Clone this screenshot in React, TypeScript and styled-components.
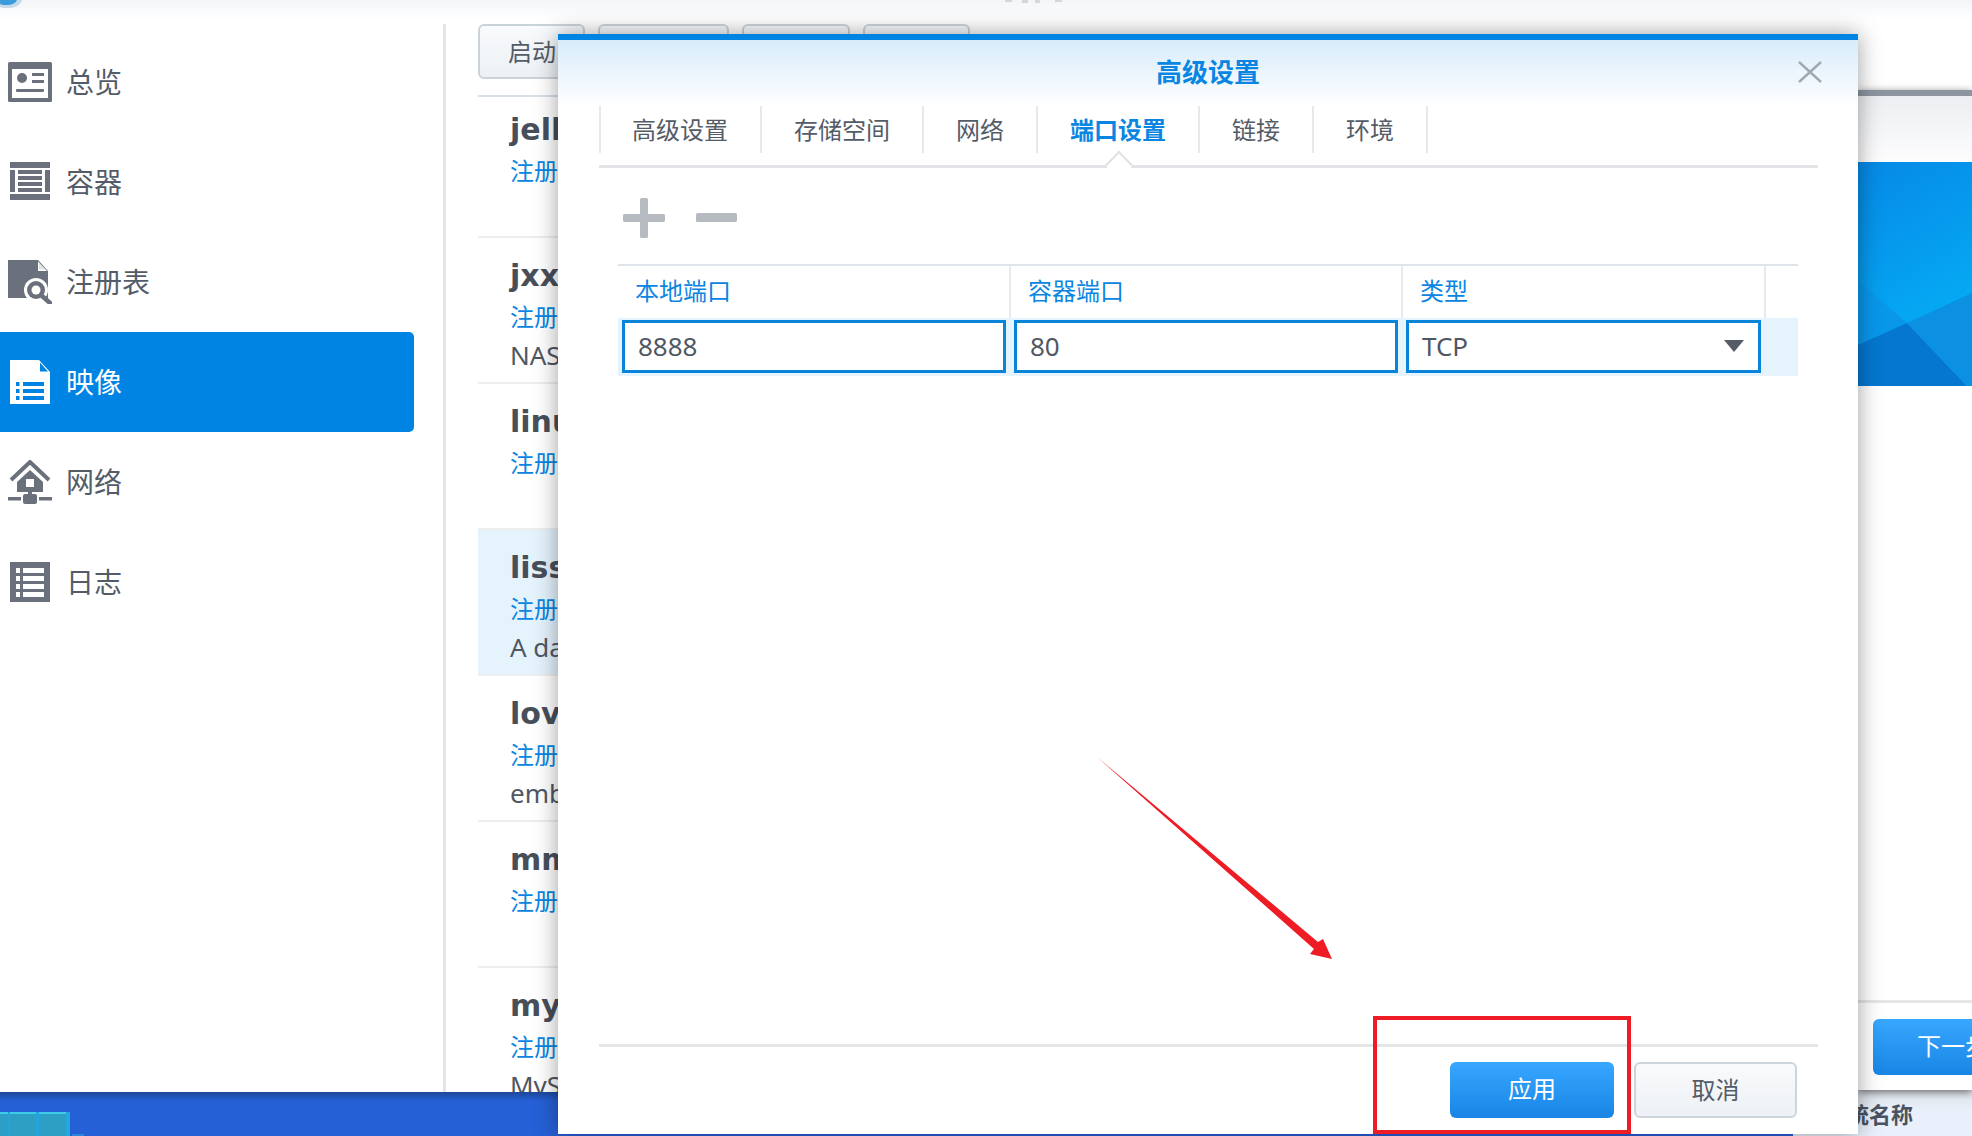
import styled, { createGlobalStyle } from "styled-components";

const BLUE = "#0084e3";
const GRAY = "#6a717c";
const TEXT = "#545c68";

const GlobalStyle = createGlobalStyle`
  html, body {
    margin: 0;
    padding: 0;
    overflow: hidden;
    background: #fff;
  }
  * {
    box-sizing: border-box;
  }
  body {
    font-family: "Noto Sans", "Noto Sans CJK SC", sans-serif;
    color: ${TEXT};
  }
`;

function OverviewIcon() {
  return (
    <svg width="44" height="44" viewBox="0 0 44 44">
      <rect y="2" width="44" height="40" rx="1.5" fill="currentColor" />
      <rect x="4" y="9" width="36" height="29" fill="#fff" />
      <circle cx="14" cy="18" r="5" fill="currentColor" />
      <rect x="24" y="13" width="12" height="3" fill="currentColor" />
      <rect x="24" y="20" width="12" height="3" fill="currentColor" />
      <rect x="8" y="29" width="28" height="3" rx="1" fill="currentColor" />
    </svg>
  );
}

function ContainerIcon() {
  return (
    <svg width="44" height="44" viewBox="0 0 44 44">
      <rect x="2" y="2" width="40" height="6" fill="currentColor" />
      <rect x="2" y="34" width="40" height="6" fill="currentColor" />
      <rect x="2" y="10" width="5" height="22" fill="currentColor" />
      <rect x="37" y="10" width="5" height="22" fill="currentColor" />
      <rect x="10" y="10" width="24" height="4" fill="currentColor" />
      <rect x="10" y="16" width="24" height="4" fill="currentColor" />
      <rect x="10" y="22" width="24" height="4" fill="currentColor" />
      <rect x="10" y="28" width="24" height="4" fill="currentColor" />
    </svg>
  );
}

function RegistryIcon() {
  return (
    <svg width="44" height="44" viewBox="0 0 44 44">
      <path d="M0 0H30L40 11V38H0Z" fill="currentColor" />
      <path d="M30 1.5V11H39Z" fill="#fff" />
      <path d="M31 3L37 9.5H31Z" fill="currentColor" opacity="0.2" />
      <circle cx="28" cy="30" r="12" fill="#fff" />
      <circle cx="28" cy="30" r="9" fill="currentColor" />
      <circle cx="28" cy="30" r="4.5" fill="#fff" />
      <path d="M34 36L42 43" stroke="currentColor" strokeWidth="4.5" strokeLinecap="round" />
    </svg>
  );
}

function ImageIcon() {
  return (
    <svg width="44" height="44" viewBox="0 0 44 44">
      <path d="M2 0H31L42 12V44H2Z" fill="#fff" />
      <path d="M32 2.5V11.5H40Z" fill={BLUE} />
      <g fill={BLUE}>
        <rect x="8" y="22" width="3.5" height="4" />
        <rect x="8" y="29" width="3.5" height="4" />
        <rect x="8" y="36" width="3.5" height="4" />
        <rect x="15" y="22" width="21" height="4" />
        <rect x="15" y="29" width="21" height="4" />
        <rect x="15" y="36" width="21" height="4" />
      </g>
    </svg>
  );
}

function NetworkIcon() {
  return (
    <svg width="44" height="44" viewBox="0 0 44 44">
      <path d="M3 20L22 2L41 20" fill="none" stroke="currentColor" strokeWidth="4" />
      <path d="M22 10L35 22V32H9V22Z" fill="currentColor" />
      <rect x="18" y="19" width="8" height="8" fill="#fff" />
      <rect x="20" y="30" width="4" height="6" fill="currentColor" />
      <rect y="37" width="13" height="3.5" fill="currentColor" />
      <rect x="31" y="37" width="13" height="3.5" fill="currentColor" />
      <rect x="15" y="34" width="14" height="10" rx="2" fill="currentColor" />
    </svg>
  );
}

function LogIcon() {
  return (
    <svg width="44" height="44" viewBox="0 0 44 44">
      <rect x="2" y="2" width="40" height="40" fill="currentColor" />
      <g fill="#fff">
        <rect x="8" y="8" width="4" height="5" />
        <rect x="8" y="16" width="4" height="5" />
        <rect x="8" y="24" width="4" height="5" />
        <rect x="8" y="32" width="4" height="5" />
        <rect x="15" y="8" width="21" height="5" />
        <rect x="15" y="16" width="21" height="5" />
        <rect x="15" y="24" width="21" height="5" />
        <rect x="15" y="32" width="21" height="5" />
      </g>
    </svg>
  );
}

const navItems = [
  { label: "总览", icon: <OverviewIcon /> },
  { label: "容器", icon: <ContainerIcon /> },
  { label: "注册表", icon: <RegistryIcon /> },
  { label: "映像", icon: <ImageIcon />, active: true },
  { label: "网络", icon: <NetworkIcon /> },
  { label: "日志", icon: <LogIcon /> },
];

const images = [
  { name: "jell", desc: "" },
  { name: "jxx", desc: "NAS" },
  { name: "linu", desc: "" },
  { name: "liss", desc: "A da", selected: true },
  { name: "lov", desc: "emb" },
  { name: "mm", desc: "" },
  { name: "my", desc: "MyS" },
];

const tabs = ["高级设置", "存储空间", "网络", "端口设置", "链接", "环境"];

export default function App() {
  return (
    <Desktop>
      <GlobalStyle />
      <AppWindow>
        <TopStrip>
          <svg width="22" height="8" viewBox="0 0 22 8">
            <path d="M0 0H22C20 6 14 8 8 8C4 8 2 8 0 7Z" fill="#c5d9e8" />
            <path d="M0 0H17C15 4 11 5 7 5C4 5 2 5 0 4Z" fill="#3c9bdc" />
          </svg>
          <TitleMarks width="60" height="4" viewBox="0 0 60 4">
            <rect x="0" width="7" height="2" fill="#d4d7db" />
            <rect x="17" width="6" height="3" fill="#d4d7db" />
            <rect x="30" width="5" height="3" fill="#d4d7db" />
            <rect x="50" width="7" height="2" fill="#d4d7db" />
          </TitleMarks>
        </TopStrip>
        <WindowBody>
          <Sidebar>
            {navItems.map((item) => (
              <NavItem key={item.label} $active={item.active}>
                {item.icon}
                <span>{item.label}</span>
              </NavItem>
            ))}
          </Sidebar>
          <Main>
            <Toolbar>
              <ToolButton $width={107}>启动</ToolButton>
              <ToolButton $width={131} />
              <ToolButton $width={108} />
              <ToolButton $width={107} />
            </Toolbar>
            <ImageList>
              {images.map((img) => (
                <ImageRow key={img.name} $selected={img.selected}>
                  <ImageName>{img.name}</ImageName>
                  <ImageSource>注册</ImageSource>
                  <ImageDesc>{img.desc}</ImageDesc>
                </ImageRow>
              ))}
            </ImageList>
          </Main>
        </WindowBody>
      </AppWindow>
      <Taskbar>
        <svg width="86" height="24" viewBox="0 0 86 24">
          <rect width="70" height="24" fill="#2e9fc4" />
          <rect width="70" height="2" fill="#3dcbe8" />
          <rect x="8" width="2" height="24" fill="#25a3dc" />
          <rect x="36" width="3" height="24" fill="#25a3dc" />
          <rect x="66" width="4" height="24" fill="#25a8de" />
          <rect x="72" y="22" width="12" height="2" fill="#2a86dc" />
        </svg>
      </Taskbar>

      <SummaryPanel>
        <SummaryLabel>系统名称</SummaryLabel>
      </SummaryPanel>

      <WizardWindow>
        <WizardHeader />
        <WizardHero viewBox="0 0 114 224" preserveAspectRatio="none">
          <defs>
            <linearGradient id="heroTop" x1="0" y1="0" x2="0.3" y2="1">
              <stop offset="0" stopColor="#0689e6" />
              <stop offset="1" stopColor="#05b0f7" />
            </linearGradient>
          </defs>
          <rect width="114" height="224" fill="url(#heroTop)" />
          <path d="M0 118L49 161L0 183Z" fill="#0997ea" />
          <path d="M0 183L49 161L109 224H0Z" fill="#0577d0" />
          <path d="M49 161L114 131V224H109Z" fill="#0b90e2" />
        </WizardHero>
        <WizardBody />
        <WizardFooter>
          <NextButton>下一步</NextButton>
        </WizardFooter>
      </WizardWindow>

      <Dialog>
        <DialogHeader>
          <span />
          <DialogTitle>高级设置</DialogTitle>
          <CloseIcon width="24" height="22" viewBox="0 0 24 22">
            <path d="M1 1L23 21M23 1L1 21" stroke="#a2a8b0" strokeWidth="2.4" fill="none" />
          </CloseIcon>
        </DialogHeader>
        <TabBar>
          {tabs.map((tab) => (
            <Tab key={tab} $active={tab === "端口设置"}>
              {tab}
            </Tab>
          ))}
        </TabBar>
        <DialogBody>
          <TableTools>
            <svg width="42" height="40" viewBox="0 0 42 40">
              <rect y="16" width="42" height="8" rx="1.5" fill="#b6bbc2" />
              <rect x="17" width="8" height="40" rx="1.5" fill="#b6bbc2" />
            </svg>
            <svg width="41" height="40" viewBox="0 0 41 40">
              <rect y="15" width="41" height="9" rx="1.5" fill="#b6bbc2" />
            </svg>
          </TableTools>
          <PortTable>
            <HeadCell>本地端口</HeadCell>
            <HeadCell>容器端口</HeadCell>
            <HeadCell>类型</HeadCell>
            <HeadCell />
            <BodyCell>
              <Field>8888</Field>
            </BodyCell>
            <BodyCell>
              <Field>80</Field>
            </BodyCell>
            <BodyCell>
              <Field>
                TCP
                <svg width="20" height="12" viewBox="0 0 20 12">
                  <path d="M0 0H20L10 12Z" fill="#555c68" />
                </svg>
              </Field>
            </BodyCell>
            <BodyCell />
          </PortTable>
        </DialogBody>
        <DialogFooter>
          <PrimaryButton>应用</PrimaryButton>
          <SecondaryButton>取消</SecondaryButton>
        </DialogFooter>
      </Dialog>

      <ArrowMark width="250" height="215" viewBox="0 0 250 215">
        <polygon points="7,7 228,192 233,189 242,209 220,204 224,199" fill="#ee1c25" />
      </ArrowMark>
      <RedBox />
    </Desktop>
  );
}

const Desktop = styled.div`
  position: relative;
  width: 1972px;
  height: 1136px;
  overflow: hidden;
  display: flex;
  flex-direction: column;
  background: #fff;
`;

const AppWindow = styled.div`
  height: 1092px;
  display: flex;
  flex-direction: column;
  background: #fff;
  overflow: hidden;
`;

const TopStrip = styled.div`
  height: 20px;
  flex: none;
  display: flex;
  align-items: flex-start;
  background: linear-gradient(#f3f5f8, #fff);
`;

const TitleMarks = styled.svg`
  margin-left: 983px;
`;

const WindowBody = styled.div`
  flex: 1;
  display: flex;
  min-height: 0;
`;

const Sidebar = styled.nav`
  width: 446px;
  flex: none;
  margin-top: 4px;
  padding-top: 8px;
  border-right: 3px solid #e3e5e7;
`;

const NavItem = styled.div<{ $active?: boolean }>`
  width: 414px;
  height: 100px;
  padding-left: 8px;
  display: flex;
  align-items: center;
  gap: 14px;
  font-size: 28px;
  border-radius: 0 5px 5px 0;
  color: ${(p) => (p.$active ? "#fff" : GRAY)};
  background: ${(p) => (p.$active ? BLUE : "transparent")};
  span {
    padding-bottom: 3px;
    color: ${(p) => (p.$active ? "#fff" : TEXT)};
  }
`;

const Main = styled.main`
  flex: 1;
  min-width: 0;
  padding: 4px 0 0 32px;
  display: flex;
  flex-direction: column;
`;

const Toolbar = styled.div`
  height: 73px;
  flex: none;
  display: flex;
  gap: 13px;
  align-items: flex-start;
  border-bottom: 2px solid #d8dfe6;
`;

const ToolButton = styled.div<{ $width: number }>`
  width: ${(p) => p.$width}px;
  height: 55px;
  padding-left: 28px;
  font-size: 24px;
  line-height: 51px;
  color: ${TEXT};
  border: 2px solid #cbd3da;
  border-radius: 6px;
  background: linear-gradient(#f8fafc, #edf1f5);
`;

const ImageList = styled.div`
  flex: 1;
  min-height: 0;
`;

const ImageRow = styled.div<{ $selected?: boolean }>`
  height: 146px;
  padding: 19px 0 0 32px;
  border-bottom: 2px solid #eceef0;
  background: ${(p) => (p.$selected ? "#e5f3fd" : "transparent")};
  &:first-child {
    height: 141px;
    padding-top: 14px;
  }
`;

const ImageName = styled.div`
  height: 40px;
  line-height: 37px;
  font-family: "DejaVu Sans", sans-serif;
  font-size: 30px;
  font-weight: 700;
  color: #474f5b;
`;

const ImageSource = styled.div`
  height: 40px;
  line-height: 40px;
  font-size: 24px;
  color: #0a86e2;
`;

const ImageDesc = styled.div`
  height: 40px;
  line-height: 37px;
  font-size: 26px;
  color: #4f5763;
`;

const Taskbar = styled.footer`
  height: 44px;
  flex: none;
  display: flex;
  align-items: flex-end;
  background: linear-gradient(#1c4898, #2660d6 9px);
`;

const SummaryPanel = styled.div`
  position: absolute;
  left: 1793px;
  top: 1090px;
  width: 179px;
  height: 46px;
  padding-left: 32px;
  display: flex;
  align-items: center;
  background: linear-gradient(#dfe3ea, #e9f0fb 20px);
`;

const SummaryLabel = styled.span`
  font-size: 22px;
  font-weight: 700;
  color: #4a5360;
`;

const WizardWindow = styled.div`
  position: absolute;
  left: 1858px;
  top: 90px;
  width: 114px;
  height: 1000px;
  display: flex;
  flex-direction: column;
  background: #fff;
  border-top: 6px solid #8d95a1;
  box-shadow: 0 2px 8px rgba(0, 0, 0, 0.55);
`;

const WizardHeader = styled.div`
  height: 66px;
  flex: none;
  background: linear-gradient(#eceef1, #fdfdfe);
`;

const WizardHero = styled.svg`
  display: block;
  width: 114px;
  height: 224px;
  flex: none;
`;

const WizardBody = styled.div`
  flex: 1;
`;

const WizardFooter = styled.div`
  height: 90px;
  flex: none;
  padding: 16px 0 0 15px;
  border-top: 3px solid #e4e6e8;
  overflow: hidden;
`;

const NextButton = styled.div`
  width: 164px;
  height: 56px;
  padding-left: 44px;
  font-size: 24px;
  line-height: 54px;
  color: #fff;
  border-radius: 6px;
  background: linear-gradient(#37a7ff, #1885e5);
`;

const Dialog = styled.div`
  position: absolute;
  left: 558px;
  top: 34px;
  width: 1300px;
  height: 1100px;
  display: flex;
  flex-direction: column;
  background: #fff;
  border-top: 6px solid ${BLUE};
  box-shadow: 0 0 22px rgba(0, 0, 0, 0.38);
`;

const DialogHeader = styled.div`
  height: 66px;
  flex: none;
  display: grid;
  grid-template-columns: 1fr auto 1fr;
  background: linear-gradient(#d7ecfb, #fff);
`;

const DialogTitle = styled.div`
  font-size: 26px;
  font-weight: 700;
  line-height: 64px;
  color: #0a86e2;
`;

const CloseIcon = styled.svg`
  justify-self: end;
  margin: 21px 36px 0 0;
`;

const TabBar = styled.div`
  height: 62px;
  flex: none;
  margin: 0 40px 0 41px;
  display: flex;
  align-items: flex-start;
  border-bottom: 3px solid #e1e3e6;
`;

const Tab = styled.div<{ $active?: boolean }>`
  position: relative;
  height: 47px;
  padding: 0 32px;
  font-size: 24px;
  line-height: 47px;
  font-weight: ${(p) => (p.$active ? 700 : 400)};
  color: ${(p) => (p.$active ? "#0a86e2" : TEXT)};
  border-right: 2px solid #e6e8eb;
  &:first-child {
    padding: 0 32px 0 31px;
    border-left: 2px solid #e6e8eb;
  }
  ${(p) =>
    p.$active &&
    `
    &::after {
      content: "";
      position: absolute;
      left: 50%;
      bottom: -22px;
      width: 18px;
      height: 18px;
      margin-left: -9px;
      background: #fff;
      border-top: 2px solid #dfe1e4;
      border-left: 2px solid #dfe1e4;
      transform: rotate(45deg);
    }
  `}
`;

const DialogBody = styled.div`
  flex: 1;
  min-height: 0;
  padding: 0 60px;
`;

const TableTools = styled.div`
  display: flex;
  gap: 31px;
  padding: 30px 0 26px 5px;
  svg {
    display: block;
  }
`;

const PortTable = styled.div`
  display: grid;
  grid-template-columns: 393px 392px 363px 32px;
  grid-template-rows: 52px 58px;
  border-top: 2px solid #dfe4ea;
`;

const HeadCell = styled.div`
  padding-left: 17px;
  font-size: 24px;
  line-height: 50px;
  color: #0a86e2;
  border-right: 2px solid #e7e9ec;
  &:nth-child(4) {
    border-right: 0;
  }
`;

const BodyCell = styled.div`
  padding: 2px 5px 3px 3px;
  background: #e5f3fd;
  &:nth-child(5) {
    padding-left: 4px;
  }
`;

const Field = styled.div`
  height: 100%;
  padding: 0 14px 1px 13px;
  display: flex;
  align-items: center;
  justify-content: space-between;
  font-size: 26px;
  color: #4f5763;
  background: #fff;
  border: 3px solid #0a84d8;
`;

const DialogFooter = styled.div`
  height: 90px;
  flex: none;
  margin: 0 40px 0 41px;
  padding: 15px 21px 0 0;
  display: flex;
  justify-content: flex-end;
  gap: 20px;
  border-top: 3px solid #e4e6e8;
`;

const PrimaryButton = styled.div`
  width: 164px;
  height: 56px;
  font-size: 24px;
  line-height: 54px;
  text-align: center;
  color: #fff;
  border-radius: 6px;
  background: linear-gradient(#37a7ff, #1885e5);
`;

const SecondaryButton = styled.div`
  width: 163px;
  height: 56px;
  font-size: 24px;
  line-height: 52px;
  text-align: center;
  color: ${TEXT};
  border: 2px solid #cdd5dc;
  border-radius: 6px;
  background: linear-gradient(#f9fafc, #edf1f5);
`;

const ArrowMark = styled.svg`
  position: absolute;
  left: 1090px;
  top: 750px;
`;

const RedBox = styled.div`
  position: absolute;
  left: 1373px;
  top: 1016px;
  width: 258px;
  height: 118px;
  border: 4px solid #ee1c25;
`;
